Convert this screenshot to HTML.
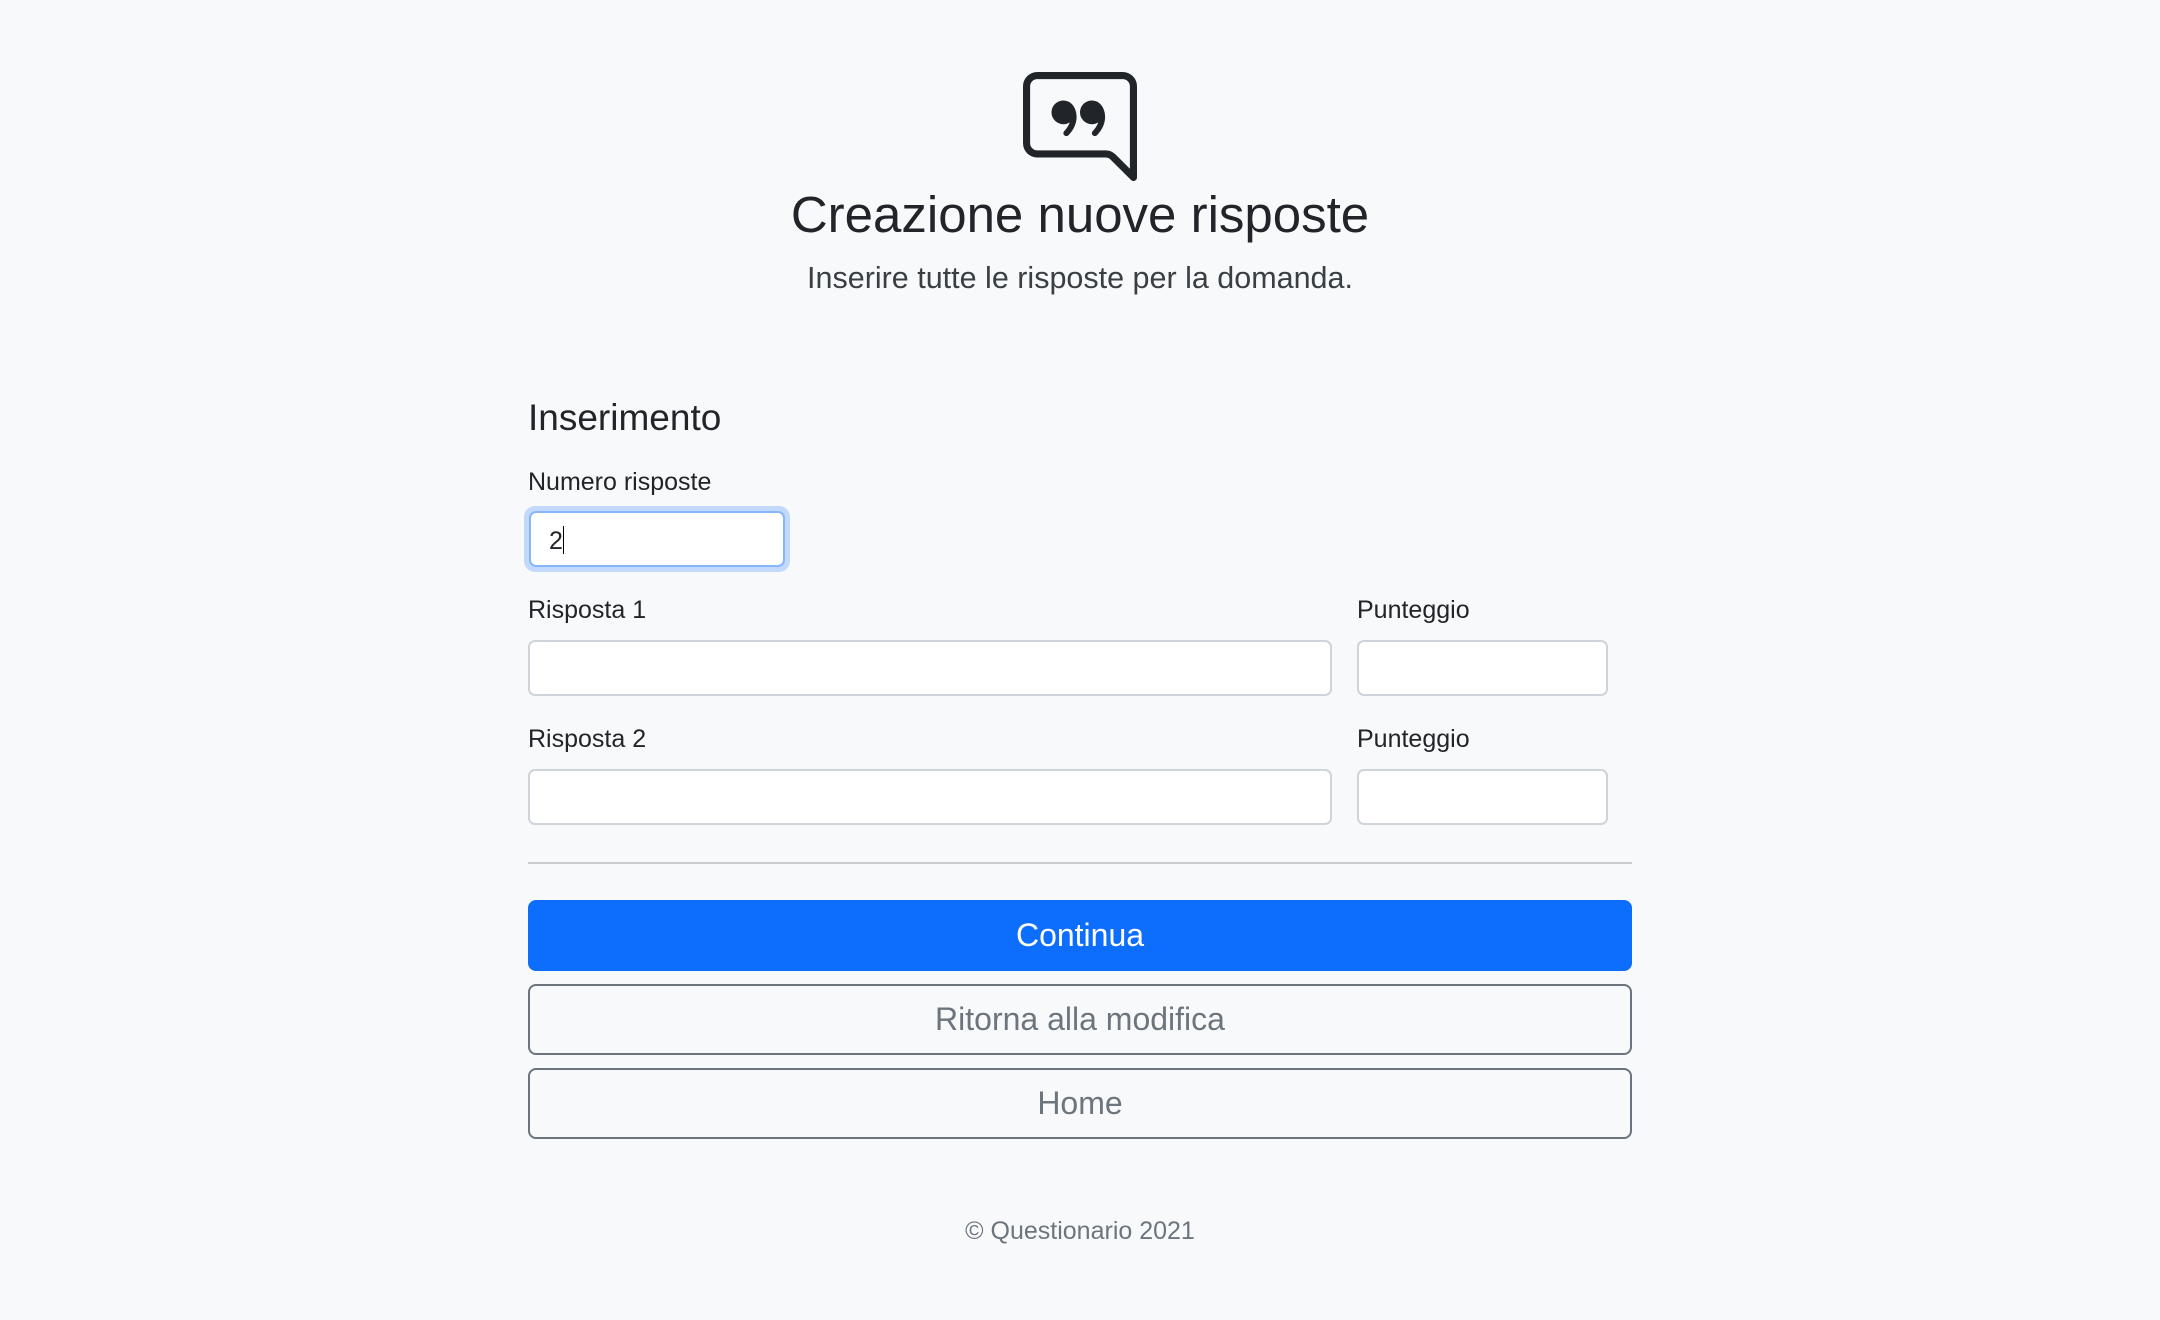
<!DOCTYPE html>
<html><head><meta charset="utf-8"><style>
*{box-sizing:border-box;margin:0;padding:0}
body{width:2160px;height:1320px;background:#f8f9fa;font-family:"Liberation Sans",sans-serif;color:#212529;position:relative;overflow:hidden}
.a{position:absolute}
.lbl{font-size:25px;color:#212529}
.in{position:absolute;background:#fff;border:2px solid #ced4da;border-radius:7px}
.btn{position:absolute;left:528px;width:1104px;height:71px;border-radius:8px;display:flex;align-items:center;justify-content:center;font-size:32px}
.o{border:2px solid #6c757d;color:#6c757d}
</style></head><body>
<svg class="a" style="left:1023px;top:72px" width="114" height="114" viewBox="0 0 16 16" fill="#212529">
<path d="M2 1a1 1 0 0 0-1 1v8a1 1 0 0 0 1 1h9.586a2 2 0 0 1 1.414.586l2 2V2a1 1 0 0 0-1-1H2zm12-1a2 2 0 0 1 2 2v12.793a.5.5 0 0 1-.854.353l-2.853-2.853a1 1 0 0 0-.707-.293H2a2 2 0 0 1-2-2V2a2 2 0 0 1 2-2h12z"/>
<path d="M7.066 4.76A1.665 1.665 0 0 0 4 5.668a1.667 1.667 0 0 0 2.561 1.406c-.131.389-.375.804-.777 1.22a.417.417 0 1 0 .6.58c1.486-1.54 1.293-3.214.682-4.112zm4 0A1.665 1.665 0 0 0 8 5.668a1.667 1.667 0 0 0 2.561 1.406c-.131.389-.375.804-.777 1.22a.417.417 0 1 0 .6.58c1.486-1.54 1.293-3.214.682-4.112z"/>
</svg>
<div class="a" style="left:0;width:2160px;top:182px;text-align:center;font-size:51px;line-height:66px">Creazione nuove risposte</div>
<div class="a" style="left:0;width:2160px;top:259px;text-align:center;font-size:30.5px;font-weight:300;color:#3a3f44;line-height:38px">Inserire tutte le risposte per la domanda.</div>
<div class="a" style="left:528px;top:396px;font-size:37px;line-height:44px">Inserimento</div>
<div class="a lbl" style="left:528px;top:468px">Numero risposte</div>
<div class="a" style="left:524px;top:506px;width:266px;height:66px;border-radius:11px;background:#c2d9fb"></div>
<div class="in" style="left:529px;top:511px;width:256px;height:56px;border-color:#86b7fe;font-size:25px;padding:13px 0 0 18px">2<span style="display:inline-block;width:1px;height:28px;background:#000;vertical-align:-5px"></span></div>
<div class="a lbl" style="left:528px;top:596px">Risposta 1</div>
<div class="a lbl" style="left:1357px;top:596px">Punteggio</div>
<div class="in" style="left:528px;top:640px;width:804px;height:56px"></div>
<div class="in" style="left:1357px;top:640px;width:251px;height:56px"></div>
<div class="a lbl" style="left:528px;top:725px">Risposta 2</div>
<div class="a lbl" style="left:1357px;top:725px">Punteggio</div>
<div class="in" style="left:528px;top:769px;width:804px;height:56px"></div>
<div class="in" style="left:1357px;top:769px;width:251px;height:56px"></div>
<div class="a" style="left:528px;top:862px;width:1104px;height:2px;background:#c9cbcd"></div>
<div class="btn" style="top:900px;background:#0d6efd;color:#fff">Continua</div>
<div class="btn o" style="top:984px">Ritorna alla modifica</div>
<div class="btn o" style="top:1068px">Home</div>
<div class="a" style="left:0;width:2160px;top:1217px;text-align:center;font-size:25px;color:#6c757d">© Questionario 2021</div>
</body></html>
